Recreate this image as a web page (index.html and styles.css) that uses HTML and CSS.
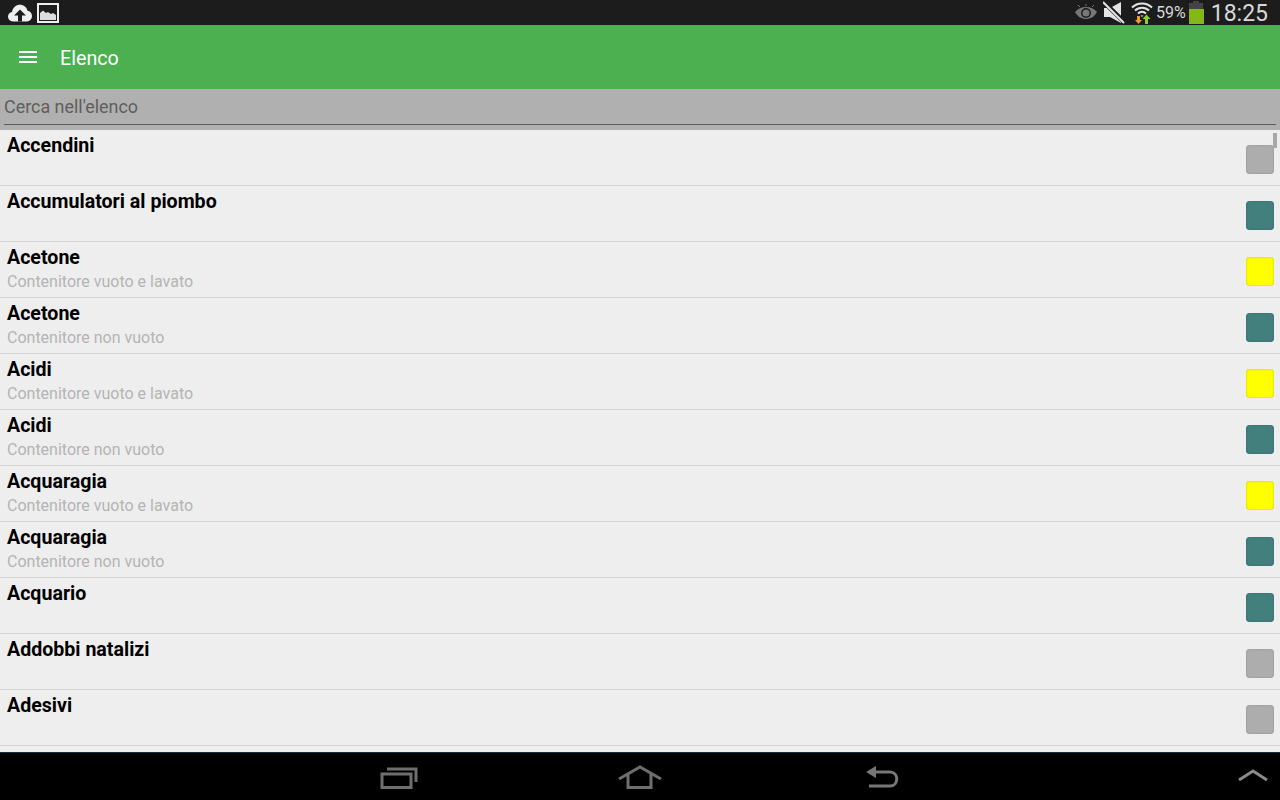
FILE: index.html
```html
<!DOCTYPE html>
<html lang="it">
<head>
  <meta charset="UTF-8">
  <title>Elenco</title>
  <link rel="stylesheet" href="styles.css">
</head>
<body>
  <div class="status-bar">
    <div class="status-left">
      <svg class="icon-cloud" width="24" height="18" viewBox="0 0 24 18"><path fill="#eee" d="M6 17.5C2.5 17.5 0 15.500 0 12.500 0 10 1.800 8.300 4 8 4.800 3.500 8 .8 12 .8c3.700 0 6.700 2.400 7.500 6 2.700.3 4.500 2.500 4.500 5.200 0 3-2.300 5.500-5.500 5.500z"/><path fill="#1c1c1c" d="M12 5.500l-6 6h4v6h4v-6h4z"/></svg>
      <svg class="icon-pic" width="22" height="20" viewBox="0 0 22 20"><rect x="1" y="1" width="20" height="18" fill="#1c1c1c" stroke="#eee" stroke-width="2"/><path fill="#ddd" d="M3 17v-7l3-2.500 3 2.500 2-1 3 2 2-1 3 2v5z"/></svg>
    </div>
    <div class="status-right">
      <svg width="22" height="18" viewBox="0 0 22 18"><path fill="#777" d="M0 8c3-3.500 6.500-5 11-5s8 1.500 11 5c-3 5-6.500 7-11 7S3 13 0 8z"/><circle cx="11" cy="9" r="5" fill="#1c1c1c"/><circle cx="11" cy="9" r="3.500" fill="#777"/><path stroke="#777" stroke-width="1" d="M5 3L3 1M11 2V0M17 3l2-2"/></svg>
      <svg width="22" height="23" viewBox="0 0 22 23"><path fill="#e4e4e4" d="M1 7h6l11-6v21L7 16H1z"/><path stroke="#1c1c1c" stroke-width="4.500" d="M0 0l22 22"/><path stroke="#e4e4e4" stroke-width="2" d="M0 1l21 21"/></svg>
      <svg width="22" height="23" viewBox="0 0 22 23"><g fill="none" stroke="#e4e4e4" stroke-width="2"><path d="M1 6.500c5.500-5.500 14.500-5.500 20 0"/><path d="M4 9.500c3.800-3.800 10.200-3.800 14 0"/><path d="M7 12.500c2.300-2.200 5.700-2.200 8 0"/></g><path fill="#e4e4e4" d="M9.500 14.500h3L11 16z"/><path fill="#ee9a28" d="M6 15h3v4h2l-3.500 4L4 19h2z"/><path fill="#8cd02a" d="M14 23v-5h-2.500l4-4.500 4 4.500H17v5z"/></svg>
      <span class="battery-text">59%</span>
      <svg width="16" height="23" viewBox="0 0 16 23"><path fill="#444" d="M5 0h6v2h4v21H1V2h4z"/><rect x="1" y="8" width="15" height="15" fill="#84b818"/></svg>
      <span class="clock">18:25</span>
    </div>
  </div>

  <header class="app-bar">
    <div class="menu-icon"><span></span><span></span><span></span></div>
    <div class="app-title">Elenco</div>
  </header>

  <div class="search-bar">
    <div class="search-field">Cerca nell'elenco</div>
  </div>

  <main class="list">
    <div class="scroll-thumb"></div>

    <div class="row">
      <div class="row-text"><div class="name">Accendini</div></div>
      <div class="swatch grey"></div>
    </div>
    <div class="row">
      <div class="row-text"><div class="name">Accumulatori al piombo</div></div>
      <div class="swatch teal"></div>
    </div>
    <div class="row">
      <div class="row-text"><div class="name">Acetone</div><div class="note">Contenitore vuoto e lavato</div></div>
      <div class="swatch yellow"></div>
    </div>
    <div class="row">
      <div class="row-text"><div class="name">Acetone</div><div class="note">Contenitore non vuoto</div></div>
      <div class="swatch teal"></div>
    </div>
    <div class="row">
      <div class="row-text"><div class="name">Acidi</div><div class="note">Contenitore vuoto e lavato</div></div>
      <div class="swatch yellow"></div>
    </div>
    <div class="row">
      <div class="row-text"><div class="name">Acidi</div><div class="note">Contenitore non vuoto</div></div>
      <div class="swatch teal"></div>
    </div>
    <div class="row">
      <div class="row-text"><div class="name">Acquaragia</div><div class="note">Contenitore vuoto e lavato</div></div>
      <div class="swatch yellow"></div>
    </div>
    <div class="row">
      <div class="row-text"><div class="name">Acquaragia</div><div class="note">Contenitore non vuoto</div></div>
      <div class="swatch teal"></div>
    </div>
    <div class="row">
      <div class="row-text"><div class="name">Acquario</div></div>
      <div class="swatch teal"></div>
    </div>
    <div class="row">
      <div class="row-text"><div class="name">Addobbi natalizi</div></div>
      <div class="swatch grey"></div>
    </div>
    <div class="row">
      <div class="row-text"><div class="name">Adesivi</div></div>
      <div class="swatch grey"></div>
    </div>
  </main>

  <nav class="nav-bar">
    <svg class="nav-recent" width="38" height="24" viewBox="0 0 38 24"><g fill="none" stroke="#6e6e6e" stroke-width="3"><rect x="2" y="9" width="29" height="13.500"/><path d="M7 4h29v13"/></g></svg>
    <svg class="nav-home" width="44" height="24" viewBox="0 0 44 24"><g fill="none" stroke="#6e6e6e" stroke-width="3"><path d="M1 14L22 2l21 12"/><path d="M10 9v13.500h23V9"/></g></svg>
    <svg class="nav-back" width="34" height="24" viewBox="0 0 34 24"><path fill="#777" d="M1 7l10-6v12z"/><path fill="none" stroke="#777" stroke-width="3" d="M8 7h17c9 0 9 14 0 14H4"/></svg>
    <svg class="nav-up" width="30" height="14" viewBox="0 0 30 14"><path fill="none" stroke="#8a8a8a" stroke-width="3" d="M1 12L15 3l14 9"/></svg>
  </nav>
</body>
</html>
```

FILE: styles.css
```css
* {
  margin: 0;
  padding: 0;
  box-sizing: border-box;
}

html, body {
  width: 1280px;
  height: 800px;
  overflow: hidden;
}

body {
  display: flex;
  flex-direction: column;
  background: #eeeeee;
  font-family: Roboto, 'Liberation Sans', sans-serif;
}

.status-bar {
  height: 25px;
  background: #1c1c1c;
  display: flex;
  justify-content: space-between;
  align-items: center;
  padding: 0 12px 0 8px;
  flex-shrink: 0;
}

.status-left, .status-right {
  display: flex;
  align-items: center;
}

.status-left {
  gap: 5px;
}

.status-right {
  gap: 6px;
}

.status-right svg {
  display: block;
}

.battery-text {
  font-size: 16px;
  color: #d8d8d8;
  margin-left: -3px;
  margin-right: -4px;
}

.clock {
  font-size: 23px;
  line-height: 25px;
  padding-top: 2px;
  color: #d8d8d8;
  margin-left: 1px;
}

.app-bar {
  height: 64px;
  background: #4caf50;
  display: flex;
  align-items: center;
  padding-left: 19px;
  flex-shrink: 0;
}

.menu-icon {
  width: 18px;
  display: flex;
  flex-direction: column;
  gap: 3px;
  margin-right: 23px;
}

.menu-icon span {
  height: 2px;
  background: #fff;
}

.app-title {
  font-size: 19.7px;
  line-height: 24px;
  padding-top: 4px;
  color: #fff;
}

.search-bar {
  height: 41px;
  background: #b0b0b0;
  padding: 0 4px;
  flex-shrink: 0;
}

.search-field {
  height: 36px;
  border-bottom: 1px solid #5f5f5f;
  font-size: 17.9px;
  line-height: 35px;
  color: #5e5e5e;
}

.list {
  flex: 1;
  position: relative;
  overflow: hidden;
  background: #eeeeee;
}

.scroll-thumb {
  position: absolute;
  top: 3px;
  right: 3px;
  width: 4px;
  height: 15px;
  background: #a8a8a8;
}

.row {
  height: 56px;
  border-bottom: 1px solid #d6d6d6;
  display: flex;
  justify-content: space-between;
  padding: 4px 6px 11px 7px;
}

.name {
  font-size: 19.6px;
  line-height: 24px;
  font-weight: 700;
  color: #000;
}

.note {
  font-size: 16px;
  line-height: 24px;
  color: #b4b4b4;
}

.swatch {
  width: 28px;
  height: 29px;
  align-self: flex-end;
  border-radius: 4px;
}

.grey {
  background: #adadad;
  box-shadow: inset 0 0 2px #8a8a8a;
}

.teal {
  background: #437f7d;
  box-shadow: inset 0 0 2px #2f6362;
}

.yellow {
  background: #ffff00;
  box-shadow: inset 0 0 2px #b8b800;
}

.nav-bar {
  height: 48px;
  background: #000;
  border-top: 1px solid #0f3040;
  display: grid;
  grid-template-columns: 380px 38px 200px 44px 203px 34px 1fr 30px 12px;
  align-items: center;
  flex-shrink: 0;
}

.nav-recent {
  grid-column: 2;
}

.nav-home {
  grid-column: 4;
}

.nav-back {
  grid-column: 6;
}

.nav-up {
  grid-column: 8;
  margin-top: -4px;
}
```
